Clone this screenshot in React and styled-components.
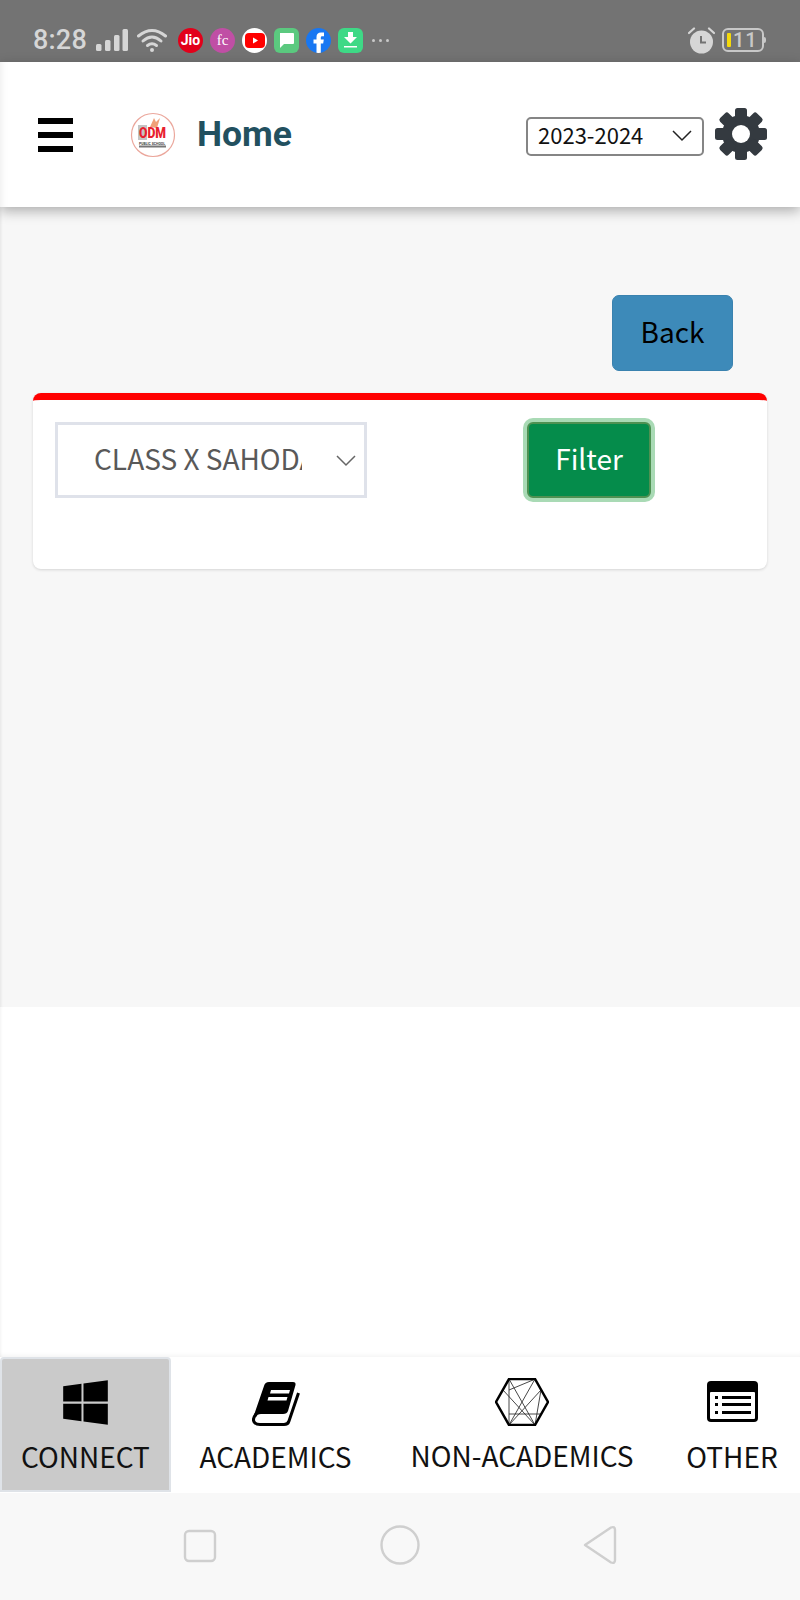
import React from 'react';
import styled, { createGlobalStyle } from 'styled-components';
import { FaWindows } from 'react-icons/fa';

const GlobalStyle = createGlobalStyle`
  html, body { margin: 0; padding: 0; background: #fff; }
  * { box-sizing: border-box; }
`;

const TEXT_FONT = `"Noto Sans CJK SC", "Noto Sans", sans-serif`;

const Page = styled.div`
  width: 800px;
  height: 1600px;
  display: flex;
  flex-direction: column;
  overflow: hidden;
  font-family: ${TEXT_FONT};
`;

const StatusBar = styled.div`
  height: 62px;
  flex: none;
  background: #737373;
  display: flex;
  align-items: center;
  padding: 18px 36px 0 33px;
  color: #d6d6d6;
`;

const Time = styled.span`
  font: 500 27px/1 Roboto, sans-serif;
  width: 63px;
  letter-spacing: 0.2px;
`;

const StatusGroup = styled.div`
  display: flex;
  align-items: center;
  gap: ${(p) => p.$gap || 8}px;
  margin-left: ${(p) => p.$left || 0}px;
`;

const AppBadge = styled.span`
  width: 25px;
  height: 25px;
  flex: none;
  display: flex;
  align-items: center;
  justify-content: center;
  overflow: hidden;
  background: ${(p) => p.$bg};
  border-radius: ${(p) => (p.$square ? '6px' : '50%')};
  color: #fff;
  font: ${(p) => p.$font || '700 14px/1 Roboto, sans-serif'};
`;

const Dots = styled.span`
  margin-left: 2px;
  display: flex;
  gap: 4px;
  i {
    width: 3px;
    height: 3px;
    border-radius: 50%;
    background: #c9c9c9;
  }
`;

const Spacer = styled.div`
  flex: 1;
`;

const Battery = styled.div`
  width: 42px;
  height: 24px;
  border: 2px solid #c8c8c8;
  border-radius: 6px;
  margin-left: 7px;
  display: flex;
  align-items: center;
  gap: 2px;
  padding-left: 3px;
  position: relative;
  font: 500 20px/1 Roboto, sans-serif;
  letter-spacing: 1px;
  color: #c8c8c8;
  &::before {
    content: '';
    width: 4px;
    height: 14px;
    background: #f5d90a;
    border-radius: 1px;
  }
  &::after {
    content: '';
    position: absolute;
    right: -4px;
    top: 7px;
    width: 2px;
    height: 6px;
    background: #c8c8c8;
    border-radius: 0 2px 2px 0;
  }
`;

const Header = styled.header`
  height: 145px;
  flex: none;
  position: relative;
  z-index: 2;
  background: #fff;
  display: flex;
  align-items: center;
  padding: 0 33px 0 38px;
  box-shadow: 0 4px 12px rgba(0, 0, 0, 0.3), inset 8px 0 8px -8px rgba(0, 0, 0, 0.1);
`;

const Burger = styled.div`
  width: 35px;
  height: 34px;
  display: flex;
  flex-direction: column;
  justify-content: space-between;
  margin-top: 1px;
  i {
    height: 6px;
    background: #000;
  }
`;

const Logo = styled.svg`
  width: 46px;
  height: 46px;
  margin-left: 57px;
  margin-top: 1px;
`;

const Title = styled.h1`
  margin: 0 0 0 21px;
  font: 700 35.5px/1 Roboto, sans-serif;
  color: #22505f;
`;

const YearSelect = styled.div`
  width: 178px;
  height: 39px;
  border: 2px solid #858585;
  border-radius: 5px;
  margin-left: auto;
  margin-top: 3px;
  padding: 0 10px 4px 10px;
  display: flex;
  align-items: center;
  justify-content: space-between;
  font-size: 22px;
  color: #111;
`;

const Chevron = styled.svg`
  flex: none;
  width: 20px;
  height: 12px;
  margin: ${(p) => p.$margin || '0'};
  path {
    fill: none;
    stroke: ${(p) => p.$color};
    stroke-width: 1.5;
  }
`;

const GearIcon = styled.svg`
  width: 52px;
  height: 52px;
  margin-left: 11px;
  margin-top: -2px;
  color: #343a40;
`;

const Main = styled.main`
  height: 800px;
  flex: none;
  background: #f7f7f7;
  padding-top: 88px;
  box-shadow: inset 3px 0 3px -2px rgba(0, 0, 0, 0.08);
`;

const BackRow = styled.div`
  display: flex;
  justify-content: flex-end;
  padding-right: 67px;
`;

const BackButton = styled.button`
  width: 121px;
  height: 76px;
  border: 1px solid #3a82af;
  border-radius: 7px;
  background: #3d8ab9;
  color: #000;
  padding: 0 0 4px;
  font: 400 28px/1 ${TEXT_FONT};
`;

const Card = styled.section`
  margin: 22px 33px 0;
  height: 176px;
  background: #fff;
  border-top: 7px solid #ff0000;
  border-radius: 8px;
  padding: 22px;
  box-shadow: 0 1px 3px rgba(0, 0, 0, 0.14);
  display: flex;
  align-items: flex-start;
`;

const ClassSelect = styled.div`
  width: 312px;
  height: 76px;
  border: 3px solid #dfe2ea;
  display: flex;
  align-items: center;
  padding: 0 8px 0 36px;
  color: #595959;
  font-size: 28px;
`;

const ClassValue = styled.span`
  width: 208px;
  overflow: hidden;
  white-space: nowrap;
  padding-bottom: 4px;
`;

const FilterButton = styled.button`
  width: 124px;
  height: 76px;
  margin-left: 160px;
  background: #058c4b;
  border: 2px solid #4f9152;
  border-radius: 6px;
  box-shadow: 0 0 0 4px #a9dab5;
  color: #fff;
  padding: 0 0 4px;
  font: 400 28px/1 ${TEXT_FONT};
`;

const Blank = styled.div`
  height: 350px;
  flex: none;
  background: #fff;
  box-shadow: inset 3px 0 3px -2px rgba(0, 0, 0, 0.05), inset 0 -6px 6px -6px rgba(0, 0, 0, 0.08);
`;

const BottomNav = styled.nav`
  height: 136px;
  flex: none;
  background: #fff;
  display: grid;
  grid-template-columns: 171px 209px 284px 136px;
`;

const NavItem = styled.div`
  display: flex;
  flex-direction: column;
  align-items: center;
  padding-top: ${(p) => p.$top}px;
  background: ${(p) => (p.$active ? '#cacaca' : 'transparent')};
  border: ${(p) => (p.$active ? '2px solid #dfe3e8' : 'none')};
  border-radius: ${(p) => (p.$active ? '4px 4px 0 0' : '0')};
  height: ${(p) => (p.$active ? '135px' : 'auto')};
  color: #111;
`;

const NavLabel = styled.span`
  font-size: 28px;
  line-height: 1;
  white-space: nowrap;
  margin-top: ${(p) => p.$gap}px;
`;

const WindowsIcon = styled(FaWindows)`
  width: 51px;
  height: 51px;
  color: #000;
`;

const SystemBar = styled.div`
  flex: 1;
  background: #f8f8f8;
  display: grid;
  grid-template-columns: repeat(3, 200px);
  padding: 36px 100px 0;
  justify-items: center;
  align-items: start;
`;

const SystemKey = styled.svg`
  margin-top: ${(p) => p.$top || 0}px;
  fill: none;
  stroke: #cfcfcf;
  stroke-width: 2.4;
  stroke-linejoin: round;
`;

function AppIcons() {
  return (
    <StatusGroup $gap={7}>
      <AppBadge $bg="#e2001a">Jio</AppBadge>
      <AppBadge $bg="#c04fa5" $font="400 15px/1 'Liberation Serif', serif">fc</AppBadge>
      <AppBadge $bg="#fff">
        <svg width="20" height="15" viewBox="0 0 20 15">
          <rect width="20" height="15" rx="4" fill="#f00" />
          <path d="M8 4.5 L13 7.5 L8 10.5Z" fill="#fff" />
        </svg>
      </AppBadge>
      <AppBadge $bg="#5bc97f" $square>
        <svg width="17" height="17" viewBox="0 0 17 17">
          <path d="M2 1 H15 Q16 1 16 2 V11 Q16 12 15 12 H6 L2 16 Z" fill="#fff" />
        </svg>
      </AppBadge>
      <AppBadge $bg="#1877f2">
        <svg width="25" height="25" viewBox="0 0 25 25">
          <path d="M10.5 25 V15.5 H7.5 V11.5 H10.5 V9 Q10.5 4.5 15 4.5 H18 V8.2 H16 Q14.8 8.2 14.8 9.5 V11.5 H17.8 L17.2 15.5 H14.8 V25 Z" fill="#fff" />
        </svg>
      </AppBadge>
      <AppBadge $bg="#3ed986" $square>
        <svg width="15" height="16" viewBox="0 0 15 16">
          <path d="M5 0 H10 V5 H14 L7.5 11.5 L1 5 H5Z M1 14 H14 V15.5 H1Z" fill="#fff" />
        </svg>
      </AppBadge>
      <Dots><i /><i /><i /></Dots>
    </StatusGroup>
  );
}

function Gear() {
  const teeth = [0, 45, 90, 135, 180, 225, 270, 315];
  return (
    <GearIcon viewBox="0 0 52 52">
      <circle cx="26" cy="26" r="19" fill="currentColor" />
      {teeth.map((deg) => (
        <rect key={deg} x="20" y="0" width="12" height="14" rx="2.5" fill="currentColor" transform={`rotate(${deg} 26 26)`} />
      ))}
      <circle cx="26" cy="26" r="9" fill="#fff" />
    </GearIcon>
  );
}

function BookIcon() {
  return (
    <svg width="48" height="44" viewBox="0 0 48 44">
      <path d="M17 0 H41 Q44 0 43.5 3 L36 29 Q35 32 31 32 H9 Q5 32 4 35 L2 33 L12 4 Q13 0 17 0Z" fill="#000" />
      <path d="M4 32 Q-0.5 38 3 41 Q4.5 42.5 8 42.5 H32 Q36 42.5 37 39 L46.5 11" fill="none" stroke="#000" strokeWidth="3" />
      <path d="M19 8 H38 L37 11.5 H18Z M16.5 15 H35.5 L34.5 18.5 H15.5Z" fill="#fff" />
    </svg>
  );
}

function HexIcon() {
  return (
    <svg width="54" height="48" viewBox="0 0 54 48">
      <g fill="none" stroke="#333" strokeWidth="0.9">
        <path d="M14 1 L40 47 M40 1 L14 47 M14 1 V47 M14 12 L38 2 M8 12 L40 47 M46 12 L14 47 M14 36 H46 M46 12 L40 47" />
      </g>
      <path d="M1 24 L14 1 H40 L53 24 L40 47 H14Z" fill="none" stroke="#000" strokeWidth="2.5" />
    </svg>
  );
}

function OtherIcon() {
  return (
    <svg width="51" height="41" viewBox="0 0 51 41">
      <rect width="51" height="41" rx="4" fill="#000" />
      <rect x="3" y="11" width="45" height="27" rx="1" fill="#fff" />
      <path d="M8 15 h3 v3 h-3z M8 22 h3 v3 h-3z M8 30 h3 v3 h-3z M15 15 h29 v3 h-29z M15 22 h29 v3 h-29z M15 30 h29 v3 h-29z" fill="#000" />
    </svg>
  );
}

function App() {
  return (
    <Page>
      <GlobalStyle />
      <StatusBar>
        <Time>8:28</Time>
        <StatusGroup $gap={9}>
          <svg width="32" height="22" viewBox="0 0 32 22">
            <g fill="#d6d6d6">
              <rect x="0" y="15" width="5.5" height="7" rx="1.5" />
              <rect x="9" y="11" width="5.5" height="11" rx="1.5" />
              <rect x="18" y="6" width="5.5" height="16" rx="1.5" />
              <rect x="26.5" y="0" width="5.5" height="22" rx="1.5" />
            </g>
          </svg>
          <svg width="30" height="24" viewBox="0 0 30 24">
            <g fill="none" stroke="#d6d6d6" strokeWidth="3" strokeLinecap="round">
              <path d="M1.5 8 Q15 -3 28.5 8" />
              <path d="M6 13 Q15 5 24 13" />
              <path d="M10.5 17.5 Q15 14 19.5 17.5" />
            </g>
            <circle cx="15" cy="22" r="2" fill="#d6d6d6" />
          </svg>
        </StatusGroup>
        <StatusGroup $left={11}>
          <AppIcons />
        </StatusGroup>
        <Spacer />
        <svg width="27" height="27" viewBox="0 0 27 27">
          <circle cx="13.5" cy="15" r="11.5" fill="#d6d6d6" />
          <path d="M13 9 V15.5 H18" fill="none" stroke="#737373" strokeWidth="2" />
          <path d="M1 6 L6 1.5 M26 6 L21 1.5" stroke="#d6d6d6" strokeWidth="2.2" strokeLinecap="round" />
        </svg>
        <Battery>11</Battery>
      </StatusBar>

      <Header>
        <Burger><i /><i /><i /></Burger>
        <Logo viewBox="0 0 46 46">
          <circle cx="23" cy="23" r="21.5" fill="#fff" stroke="#eba79c" strokeWidth="1.2" />
          <rect x="8" y="13" width="9" height="15" fill="#c4c4c4" />
          <path d="M20 15 L24 6 L26 10 L30 6 L27 16 Z" fill="#f0a078" />
          <text x="9" y="26" textLength="27" lengthAdjust="spacingAndGlyphs" fontFamily="Roboto, sans-serif" fontWeight="900" fontSize="14" fill="#e8212e">ODM</text>
          <text x="9" y="32.5" textLength="26" lengthAdjust="spacingAndGlyphs" fontFamily="Roboto, sans-serif" fontWeight="700" fontSize="4.2" fill="#444">PUBLIC SCHOOL</text>
          <rect x="9" y="33.5" width="27" height="2" fill="#777" />
        </Logo>
        <Title>Home</Title>
        <YearSelect>
          2023-2024
          <Chevron viewBox="0 0 20 12" $color="#222" $margin="4px 0 0">
            <path d="M1 1 L10 10 L19 1" />
          </Chevron>
        </YearSelect>
        <Gear />
      </Header>

      <Main>
        <BackRow>
          <BackButton>Back</BackButton>
        </BackRow>
        <Card>
          <ClassSelect>
            <ClassValue>CLASS X SAHODAYA</ClassValue>
            <Chevron viewBox="0 0 20 12" $color="#666" $margin="2px 0 0 34px">
              <path d="M1 1 L10 10 L19 1" />
            </Chevron>
          </ClassSelect>
          <FilterButton>Filter</FilterButton>
        </Card>
      </Main>

      <Blank />

      <BottomNav>
        <NavItem $active $top={18}>
          <WindowsIcon />
          <NavLabel $gap={14}>CONNECT</NavLabel>
        </NavItem>
        <NavItem $top={25}>
          <BookIcon />
          <NavLabel $gap={16}>ACADEMICS</NavLabel>
        </NavItem>
        <NavItem $top={21}>
          <HexIcon />
          <NavLabel $gap={15}>NON-ACADEMICS</NavLabel>
        </NavItem>
        <NavItem $top={24}>
          <OtherIcon />
          <NavLabel $gap={20}>OTHER</NavLabel>
        </NavItem>
      </BottomNav>

      <SystemBar>
        <SystemKey width="34" height="34" viewBox="0 0 34 34">
          <rect x="2" y="2" width="30" height="30" rx="4" />
        </SystemKey>
        <SystemKey width="40" height="40" viewBox="0 0 40 40" $top={-4}>
          <circle cx="20" cy="20" r="18.5" />
        </SystemKey>
        <SystemKey width="34" height="40" viewBox="0 0 34 40" $top={-4}>
          <path d="M2 20 L28 2.5 Q32 1 32 5 V35 Q32 39 28 37.5 Z" />
        </SystemKey>
      </SystemBar>
    </Page>
  );
}

export default App;
